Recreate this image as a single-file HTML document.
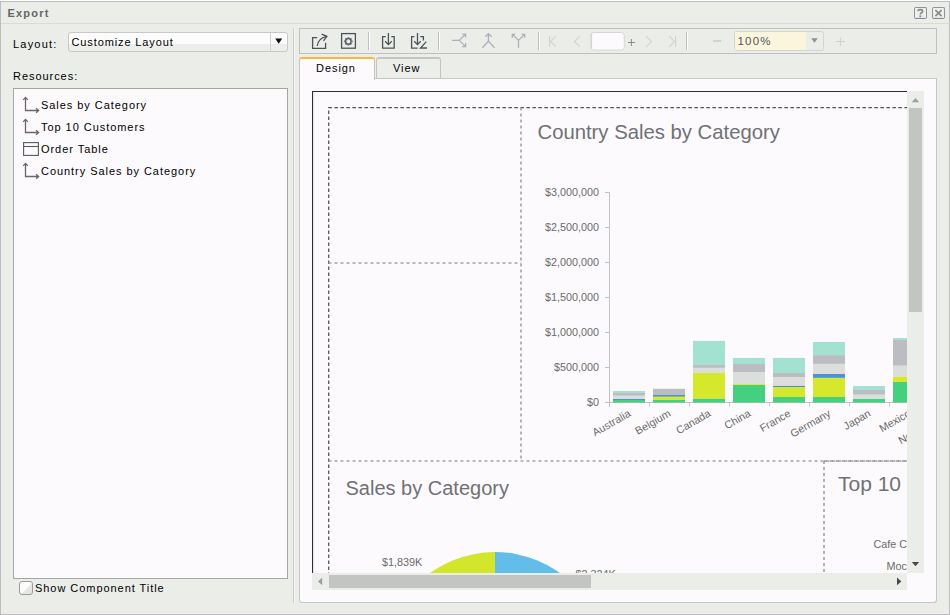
<!DOCTYPE html>
<html><head><meta charset="utf-8">
<style>
*{box-sizing:border-box;margin:0;padding:0}
html,body{width:950px;height:615px;overflow:hidden;background:#ffffff;font-family:"Liberation Sans",sans-serif;font-size:11px;color:#000}
.a{position:absolute}
.t{position:absolute;white-space:nowrap;line-height:13px;letter-spacing:0.95px}
#dlg{left:0;top:1px;width:950px;height:614px;border:1px solid #bcbcc1;background:#ebede9}
#title{left:1px;top:2px;width:948px;height:22px;border-bottom:1px solid #d9dbd7}
.btn{width:13px;height:12px;border:1px solid #939393;border-radius:2px;background:#eef0ec;border-bottom-color:#8a8a8a}
.btn:after{content:"";position:absolute;left:1px;right:1px;bottom:0;height:1px;background:#d6e8f2}
#list{left:13px;top:88px;width:275px;height:491px;border:1px solid #a6a6a6;background:#fcfafc}
#sel{left:68px;top:32px;width:220px;height:20px;border:1px solid #c8c8c8;border-radius:3px;background:linear-gradient(#fdfcfd 0,#fdfcfd 11px,#edeeeb 11px)}
#tb{left:299px;top:28px;width:638px;height:26px;border:1px solid #bfbfc5;background:#ebede9}
#content{left:299px;top:78px;width:638px;height:525px;border:1px solid #c6c6c6;border-top-color:#c9cac7;border-radius:0 0 3px 3px;background:#fcfafc}
</style></head><body>
<div id="dlg" class="a"></div>
<div id="title" class="a"></div>
<div class="t" style="left:7.5px;top:7px;font-weight:bold;color:#666;letter-spacing:1.2px">Export</div>
<div class="a btn" style="left:914px;top:7px"></div>
<div class="a btn" style="left:932px;top:7px"></div>

<!-- left panel -->
<div class="t" style="left:13px;top:38px;letter-spacing:1.2px">Layout:</div>
<div id="sel" class="a"></div>
<div class="a" style="left:270px;top:33px;width:1px;height:18px;background:#d2d2d2"></div>
<div class="t" style="left:71.5px;top:36px;letter-spacing:0.88px">Customize Layout</div>
<div class="t" style="left:13px;top:70px">Resources:</div>
<div id="list" class="a"></div>
<div class="t" style="left:41px;top:99px">Sales by Category</div>
<div class="t" style="left:41px;top:121px">Top 10 Customers</div>
<div class="t" style="left:41px;top:143px">Order Table</div>
<div class="t" style="left:41px;top:165px">Country Sales by Category</div>
<div class="a" style="left:19px;top:581px;width:14px;height:14px;border:1px solid #9c9c9c;border-radius:3px;background:linear-gradient(135deg,#fbfbfb 55%,#e6e7e4 55%)"></div>
<div class="t" style="left:35px;top:582px">Show Component Title</div>

<!-- separator -->
<div class="a" style="left:293px;top:28px;width:1px;height:575px;background:#cbccc9"></div>
<div class="a" style="left:294px;top:28px;width:1px;height:575px;background:#f6f7f4"></div>

<!-- toolbar -->
<div id="tb" class="a"></div>

<!-- tabs -->
<div id="content" class="a"></div>
<div class="a" style="left:376px;top:57px;width:65px;height:22px;border:1px solid #c3c4c2;border-top:2px solid #c6c7c4;border-radius:3px 3px 0 0;background:#eceeea"></div>
<div class="a" style="left:299px;top:57px;width:76px;height:23px;border:1px solid #c6c6c6;border-top:2px solid #f5b93e;border-bottom:none;border-radius:3px 3px 0 0;background:#fcfafc"></div>
<div class="t" style="left:316px;top:62px">Design</div>
<div class="t" style="left:393px;top:62px">View</div>

<svg class="a" style="left:0;top:0" width="950" height="615" viewBox="0 0 950 615">
<g fill="none" stroke-linecap="butt">
<!-- help / close glyphs -->
<path d="M918,11.2 Q918,9.6 920.4,9.6 Q922.6,9.6 922.6,11.2 Q922.6,12.3 921.2,13 Q920.3,13.5 920.3,14.6" stroke="#8a8a8a" stroke-width="1.7"/>
<rect x="919.4" y="15.4" width="1.9" height="1.7" fill="#8a8a8a" stroke="none"/>
<path d="M935.4,10.2 L941.6,16.2 M941.6,10.2 L935.4,16.2" stroke="#8a8a8a" stroke-width="1.7"/>
<!-- export icon -->
<g stroke="#4d5459" stroke-width="1.3">
<path d="M317.2,37.6 H312.6 V48.4 H325.6 V42.8"/>
<path d="M317.3,46 Q317.8,38.6 326.6,36.4"/>
<path d="M321.6,34.1 L326.9,36.3 L323.5,40.8"/>
<rect x="341.6" y="33.6" width="13.8" height="14.6" stroke-width="1.3"/>
<circle cx="348.4" cy="41.4" r="2.7" stroke-width="1.3"/>
<path d="M348.4,37.2 V38.2 M348.4,44.6 V45.6 M344.2,41.4 H345.2 M351.6,41.4 H352.6 M345.4,38.4 L346.1,39.1 M350.7,43.7 L351.4,44.4 M351.4,38.4 L350.7,39.1 M346.1,43.7 L345.4,44.4" stroke-width="1.6"/>
<!-- download icons -->
<path d="M385.7,36.6 H382.6 V48.2 H394.2 V36.6 H391.3"/>
<path d="M388.4,33 V44.6 M385.1,41.2 L388.4,44.6 L391.8,41.2"/>
<path d="M414.4,36.6 H411.6 V48.2 H417.6 M420.3,36.6 H423.4 V40.6"/>
<path d="M417.5,33 V44.6 M414.2,41.2 L417.5,44.6 L420.7,41.2"/>
<path d="M426.3,41.6 L420.5,48 H427"/>
</g>
<!-- separators -->
<path d="M368.5,32 V50 M438.5,32 V50 M538.5,32 V50 M686.5,32 V50" stroke="#bdbfbc" stroke-width="1"/>
<path d="M369.5,32 V50 M439.5,32 V50 M539.5,32 V50 M687.5,32 V50" stroke="#ffffff" stroke-width="1"/>
<!-- split / merge icons -->
<g stroke="#adb0b6" stroke-width="1.3">
<path d="M452,40.4 H459.2 L465.6,34.1 M459.2,40.4 L465.6,46.6 M462.2,34.1 H465.6 V37.6 M465.6,43 V46.6 H462.2"/>
<path d="M488.4,33.6 V41.2 L482.4,47.7 M488.4,41.2 L494.6,47.7 M485.3,36.7 L488.4,33.6 L491.6,36.7"/>
<path d="M518.5,47.7 V40.4 L512.3,34.3 M518.5,40.4 L524.7,34.3 M515.2,34.3 H512.3 V37.8 M521.8,34.3 H524.7 V37.8"/>
</g>
<!-- nav icons -->
<g stroke="#d2d3d0" stroke-width="1.1">
<path d="M549.6,36 V46.8 M555.8,36.1 L550.6,41.5 L555.8,46.8"/>
<path d="M579.8,36.1 L574.4,41.5 L579.8,46.8"/>
<path d="M646,36.1 L651.6,41.5 L646,46.8"/>
<path d="M669.2,36.1 L674.6,41.5 L669.2,46.8 M675.6,36 V46.8"/>
<path d="M713,41 H721.2" stroke-width="2"/>
<path d="M836.1,41.5 H845 M840.5,37.2 V46" stroke-width="1.1"/>
</g>

<!-- resources icons -->
<g fill="none" stroke="#6e6568" stroke-width="1.3">
<path d="M25.5,98 V110.5 H38 M23.2,99.9 L25.5,97.4 L27.8,99.9 M36.1,108.2 L38.6,110.5 L36.1,112.8"/>
<path d="M25.5,120 V132.5 H38 M23.2,121.9 L25.5,119.4 L27.8,121.9 M36.1,130.2 L38.6,132.5 L36.1,134.8"/>
<path d="M25.5,164 V176.5 H38 M23.2,165.9 L25.5,163.4 L27.8,165.9 M36.1,174.2 L38.6,176.5 L36.1,178.8"/>
</g>
<rect x="23.6" y="142.6" width="14.8" height="12.8" fill="none" stroke="#545b61" stroke-width="1.1"/>
<path d="M23.6,146.5 H38.4" stroke="#545b61" stroke-width="1.1"/>
<path d="M275.2,38.6 H282.2 L278.7,43.8 Z" fill="#111"/>
<!-- canvas -->
<defs><clipPath id="cv"><rect x="312" y="91" width="595" height="482"/></clipPath></defs>
<g clip-path="url(#cv)">
<path d="M312.5,600 V91.5 H950" fill="none" stroke="#2f2f33" stroke-width="1.2"/>
<path d="M328.7,600 V107.7 H950" fill="none" stroke="#505155" stroke-width="1.25" stroke-dasharray="3.5,2.5"/>
<path d="M521,107.5 V461 M328.5,263 H521 M328.5,461 H950 M824,461 V600" fill="none" stroke="#a2a2a5" stroke-width="1.6" stroke-dasharray="3,3"/>
<path d="M824,461 H950" fill="none" stroke="#68696c" stroke-width="1.2" stroke-dasharray="3,3"/>
<text x="537.5" y="139" font-size="20.3" fill="#707176">Country Sales by Category</text>
<g font-size="10.8" fill="#6b6b6b"><text x="599" y="195.5" text-anchor="end">$3,000,000</text><text x="599" y="230.5" text-anchor="end">$2,500,000</text><text x="599" y="265.5" text-anchor="end">$2,000,000</text><text x="599" y="300.5" text-anchor="end">$1,500,000</text><text x="599" y="335.5" text-anchor="end">$1,000,000</text><text x="599" y="370.5" text-anchor="end">$500,000</text><text x="599" y="405.5" text-anchor="end">$0</text></g>
<path d="M605,192.5 H609.5 M605,227.5 H609.5 M605,262.5 H609.5 M605,297.5 H609.5 M605,332.5 H609.5 M605,367.5 H609.5 M605,402.5 H609.5  M609.5,192.5 V402.5 M605,402.5 H950 M609.5,402.5 V406.5 M649.5,402.5 V406.5 M689.5,402.5 V406.5 M729.5,402.5 V406.5 M769.5,402.5 V406.5 M809.5,402.5 V406.5 M849.5,402.5 V406.5 M889.5,402.5 V406.5 M929.5,402.5 V406.5 " fill="none" stroke="#c3c3c3" stroke-width="1"/>
<rect x="613" y="391" width="32" height="2.0" fill="#a3e1d1"/><rect x="613" y="393" width="32" height="2.8" fill="#bcbdc2"/><rect x="613" y="395.8" width="32" height="3.2" fill="#dcdedb"/><rect x="613" y="399" width="32" height="1.0" fill="#4a91d8"/><rect x="613" y="400" width="32" height="2.5" fill="#45d07f"/><rect x="653" y="388.8" width="32" height="6.2" fill="#bcbdc2"/><rect x="653" y="395" width="32" height="1.8" fill="#4a91d8"/><rect x="653" y="396.8" width="32" height="3.2" fill="#d6e82b"/><rect x="653" y="400" width="32" height="2.5" fill="#45d07f"/><rect x="693" y="340.9" width="32" height="24.0" fill="#a3e1d1"/><rect x="693" y="364.9" width="32" height="3.0" fill="#bcbdc2"/><rect x="693" y="367.9" width="32" height="5.1" fill="#dcdedb"/><rect x="693" y="373" width="32" height="25.8" fill="#d6e82b"/><rect x="693" y="398.8" width="32" height="3.7" fill="#45d07f"/><rect x="733" y="357.9" width="32" height="6.1" fill="#a3e1d1"/><rect x="733" y="364" width="32" height="8.0" fill="#bcbdc2"/><rect x="733" y="372" width="32" height="12.1" fill="#dcdedb"/><rect x="733" y="384.1" width="32" height="0.9" fill="#d6e82b"/><rect x="733" y="385" width="32" height="17.5" fill="#45d07f"/><rect x="773" y="357.9" width="32" height="15.1" fill="#a3e1d1"/><rect x="773" y="373" width="32" height="4.0" fill="#bcbdc2"/><rect x="773" y="377" width="32" height="8.9" fill="#dcdedb"/><rect x="773" y="385.9" width="32" height="1.1" fill="#4a91d8"/><rect x="773" y="387" width="32" height="10.0" fill="#d6e82b"/><rect x="773" y="397" width="32" height="5.5" fill="#45d07f"/><rect x="813" y="342" width="32" height="13.1" fill="#a3e1d1"/><rect x="813" y="355.1" width="32" height="8.8" fill="#bcbdc2"/><rect x="813" y="363.9" width="32" height="10.1" fill="#dcdedb"/><rect x="813" y="374" width="32" height="3.9" fill="#4a91d8"/><rect x="813" y="377.9" width="32" height="19.1" fill="#d6e82b"/><rect x="813" y="397" width="32" height="5.5" fill="#45d07f"/><rect x="853" y="386" width="32" height="4.0" fill="#a3e1d1"/><rect x="853" y="390" width="32" height="4.8" fill="#bcbdc2"/><rect x="853" y="394.8" width="32" height="4.2" fill="#dcdedb"/><rect x="853" y="399" width="32" height="3.5" fill="#45d07f"/><rect x="893" y="338" width="32" height="2.0" fill="#a3e1d1"/><rect x="893" y="340" width="32" height="25.8" fill="#bcbdc2"/><rect x="893" y="365.8" width="32" height="11.1" fill="#dcdedb"/><rect x="893" y="376.9" width="32" height="5.1" fill="#d6e82b"/><rect x="893" y="382" width="32" height="20.5" fill="#45d07f"/>
<g font-size="10.8" fill="#6b6b6b"><text transform="translate(631.5,415.5) rotate(-30)" text-anchor="end">Australia</text><text transform="translate(671.5,415.5) rotate(-30)" text-anchor="end">Belgium</text><text transform="translate(711.5,415.5) rotate(-30)" text-anchor="end">Canada</text><text transform="translate(751.5,415.5) rotate(-30)" text-anchor="end">China</text><text transform="translate(791.5,415.5) rotate(-30)" text-anchor="end">France</text><text transform="translate(831.5,415.5) rotate(-30)" text-anchor="end">Germany</text><text transform="translate(871.5,415.5) rotate(-30)" text-anchor="end">Japan</text><text transform="translate(911.5,415.5) rotate(-30)" text-anchor="end">Mexico</text><text transform="translate(951.5,415.5) rotate(-30)" text-anchor="end">Netherlands</text></g>
<text x="345.5" y="494.5" font-size="20" fill="#707176">Sales by Category</text>
<text x="838" y="490.5" font-size="21" fill="#707176">Top 10 Customers</text>
<path d="M495,663 V552 A111,111 0 0 0 384,663 Z" fill="#d4e62b"/>
<path d="M495,663 V552 A111,111 0 0 1 606,663 Z" fill="#62bde9"/>
<g font-size="10.8" fill="#6b6b6b">
<text x="382" y="566">$1,839K</text>
<text x="575.5" y="577.5">$2,324K</text>
<text x="873.5" y="548">Cafe Capuchino</text>
<text x="886.5" y="569.5">Mocha</text>
</g>
</g>
<!-- scrollbars -->
<rect x="907" y="91" width="17" height="482" fill="#ebede9"/>
<rect x="909" y="108" width="13" height="204" fill="#c3c5c2"/>
<path d="M911.8,102.2 H919.2 L915.5,98 Z" fill="#9aa0a4"/>
<path d="M911.8,562 H919.2 L915.5,566.3 Z" fill="#48484c"/>
<rect x="312" y="573" width="595" height="17" fill="#ebede9"/>
<rect x="329" y="575" width="262" height="13" fill="#c3c5c2"/>
<path d="M322.2,577.6 V585.2 L318,581.4 Z" fill="#9aa0a4"/>
<path d="M897,577.6 V585.2 L901.3,581.4 Z" fill="#48484c"/>

<!-- page input -->
<rect x="590.8" y="32.5" width="33.5" height="17.6" rx="3" fill="#fcfafc" stroke="#d6d8d4" stroke-width="1"/>
<path d="M591.5,34 V48.6" stroke="#d6d8d4" stroke-width="1.2"/>
<path d="M628,42.5 H635 M631.4,39 V46" stroke="#8d8482" stroke-width="0.95"/>
<!-- zoom combo -->
<rect x="734.5" y="31.5" width="89" height="19" rx="2" fill="#ebede9" stroke="#d3d5d1" stroke-width="1"/>
<rect x="735" y="32" width="71" height="18" fill="#fcf5de"/>
<path d="M811.2,38.2 H817.8 L814.5,42.8 Z" fill="#8f918f" stroke="none"/>
</g>
</svg>
<div class="t" style="left:737.5px;top:35px;color:#555;font-size:11.5px;letter-spacing:1.2px">100%</div>
</body></html>
